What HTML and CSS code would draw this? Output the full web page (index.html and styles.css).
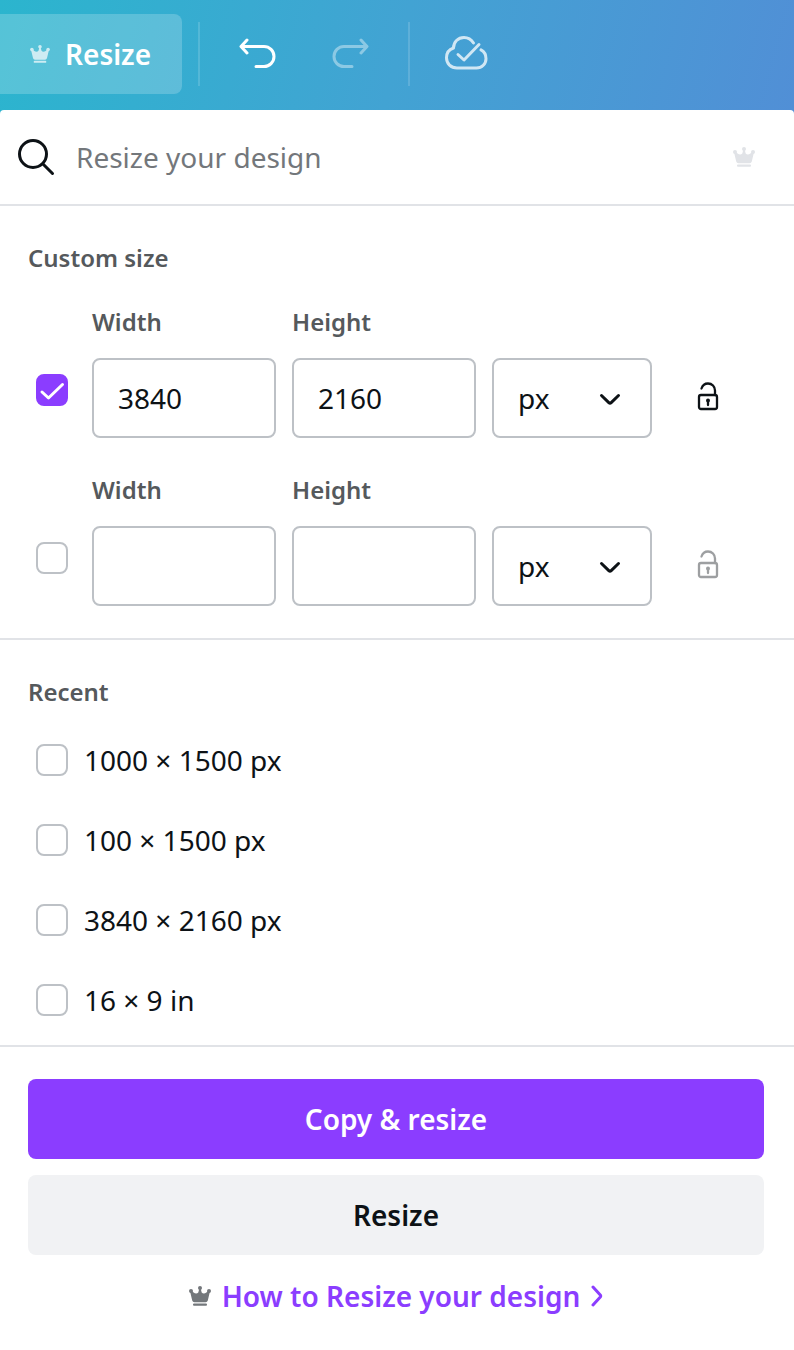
FILE: index.html
```html
<!DOCTYPE html>
<html lang="en">
<head>
    <meta charset="UTF-8">
    <meta name="viewport" content="width=device-width, initial-scale=1.0">
    <title>Resize</title>
    <link rel="stylesheet" href="styles.css">
</head>
<body>

<!-- Shared icons -->
<svg class="sprite" aria-hidden="true">
    <symbol id="crown" viewBox="0 0 22 20">
        <path d="M3.2 14.5 1.2 6 2.8 4.5C4 7 7.5 8.5 9.3 6.5L10.2 3h1.6l.9 3.5C14.5 8.5 18 7 19.2 4.5L20.8 6l-2 8.5q-.5 1.8-2.2 1.8H5.4q-1.7 0-2.2-1.8z"/>
        <circle cx="2" cy="5" r="2"/>
        <circle cx="11" cy="2" r="2"/>
        <circle cx="20" cy="5" r="2"/>
        <rect x="4" y="17.6" width="14" height="2.2" rx="1"/>
    </symbol>
    <symbol id="chevron" viewBox="0 0 24 16">
        <path d="M3.5 4.5 10.8 11.6q1.2 1.1 2.4 0L20.5 4.5" fill="none" stroke="currentColor" stroke-width="3" stroke-linecap="round" stroke-linejoin="round"/>
    </symbol>
    <symbol id="unlock" viewBox="0 0 24 32">
        <g fill="none" stroke="currentColor" stroke-width="2.3" stroke-linecap="round">
            <rect x="3" y="13" width="18" height="14" rx="2"/>
            <path d="M5.5 6.5C6.5 3.5 9 1.5 12 1.5c4 0 7 3 7 7V13"/>
            <path d="M12 19v4"/>
        </g>
        <circle cx="12" cy="18.6" r="2" fill="currentColor"/>
    </symbol>
</svg>

<header class="toolbar">
    <button type="button" class="tool-resize">
        <svg class="crown"><use href="#crown"/></svg>
        Resize
    </button>
    <span class="separator"></span>
    <button type="button" class="tool-btn" aria-label="Undo">
        <svg width="40" height="32" viewBox="0 0 40 32">
            <path d="M9 2 3 8.5l6 6.5M3.5 8.5H26a10 10 0 0 1 0 20H18"/>
        </svg>
    </button>
    <button type="button" class="tool-btn disabled" aria-label="Redo" disabled>
        <svg width="40" height="32" viewBox="0 0 40 32">
            <path d="M31 2l6 6.5-6 6.5M36.5 8.5H14a10 10 0 0 0 0 20H22"/>
        </svg>
    </button>
    <span class="separator"></span>
    <button type="button" class="tool-btn cloud" aria-label="All changes saved">
        <svg width="48" height="38" viewBox="0 0 48 38">
            <path d="M29.5 8C27.3 4.5 24 2.5 20 2.5c-6 0-10.5 4.5-10.5 10.5C5 14.5 2.5 18.5 2.5 22.8c0 6 4.5 10.2 10.5 10.2h19.500c5.5 0 9.500-4.300 9.500-9.300 0-4-2-7.200-5-8.800"/>
            <path d="M14 19.5l6 5.5L35 9.5"/>
        </svg>
    </button>
</header>

<main class="panel">
    <div class="search">
        <svg class="search-icon" width="40" height="40" viewBox="0 0 40 40">
            <circle cx="17" cy="17" r="13.5"/>
            <path d="M27 27l9.500 9.500"/>
        </svg>
        <input type="text" class="search-input" placeholder="Resize your design" aria-label="Resize your design">
        <svg class="crown"><use href="#crown"/></svg>
    </div>

    <section class="custom">
        <h2>Custom size</h2>

        <div class="size-rows">
            <div class="size-row">
                <span class="check">
                    <input type="checkbox" aria-label="Use first custom size" checked>
                    <svg viewBox="0 0 32 32"><path d="M6 18l6.5 6L26.5 10.5"/></svg>
                </span>
                <div class="field">
                    <label for="width-1">Width</label>
                    <input type="text" id="width-1" value="3840">
                </div>
                <div class="field">
                    <label for="height-1">Height</label>
                    <input type="text" id="height-1" value="2160">
                </div>
                <div class="unit">
                    <select aria-label="Unit">
                        <option>px</option>
                        <option>in</option>
                        <option>mm</option>
                        <option>cm</option>
                    </select>
                    <svg><use href="#chevron"/></svg>
                </div>
                <button type="button" class="lock" aria-label="Lock aspect ratio">
                    <svg><use href="#unlock"/></svg>
                </button>
            </div>

            <div class="size-row">
                <span class="check">
                    <input type="checkbox" aria-label="Use second custom size">
                    <svg viewBox="0 0 32 32"><path d="M6 18l6.5 6L26.5 10.5"/></svg>
                </span>
                <div class="field">
                    <label for="width-2">Width</label>
                    <input type="text" id="width-2">
                </div>
                <div class="field">
                    <label for="height-2">Height</label>
                    <input type="text" id="height-2">
                </div>
                <div class="unit">
                    <select aria-label="Unit">
                        <option>px</option>
                        <option>in</option>
                        <option>mm</option>
                        <option>cm</option>
                    </select>
                    <svg><use href="#chevron"/></svg>
                </div>
                <button type="button" class="lock" aria-label="Lock aspect ratio" disabled>
                    <svg><use href="#unlock"/></svg>
                </button>
            </div>
        </div>
    </section>

    <section class="recent">
        <h2>Recent</h2>
        <label class="recent-item">
            <span class="check"><input type="checkbox"><svg viewBox="0 0 32 32"><path d="M6 18l6.5 6L26.5 10.5"/></svg></span>
            1000 × 1500 px
        </label>
        <label class="recent-item">
            <span class="check"><input type="checkbox"><svg viewBox="0 0 32 32"><path d="M6 18l6.5 6L26.5 10.5"/></svg></span>
            100 × 1500 px
        </label>
        <label class="recent-item">
            <span class="check"><input type="checkbox"><svg viewBox="0 0 32 32"><path d="M6 18l6.5 6L26.5 10.5"/></svg></span>
            3840 × 2160 px
        </label>
        <label class="recent-item">
            <span class="check"><input type="checkbox"><svg viewBox="0 0 32 32"><path d="M6 18l6.5 6L26.5 10.5"/></svg></span>
            16 × 9 in
        </label>
    </section>

    <footer class="actions">
        <button type="button" class="btn btn-primary">Copy &amp; resize</button>
        <button type="button" class="btn btn-secondary">Resize</button>
        <div class="help">
            <svg class="crown"><use href="#crown"/></svg>
            <a href="#">How to Resize your design</a>
            <svg class="help-arrow" width="12" height="24" viewBox="0 0 12 24"><path d="M2 3l7.300 8q.8 1 0 2L2 21"/></svg>
        </div>
    </footer>
</main>

</body>
</html>
```
FILE: styles.css
```css
* {
    box-sizing: border-box;
}

body {
    margin: 0;
    font-family: 'Noto Sans', sans-serif;
    font-size: 28px;
    line-height: 40px;
    color: #0d1216;
    background: #fff;
}

button, input, select {
    font: inherit;
    color: inherit;
    margin: 0;
}

button {
    border: none;
    background: none;
    padding: 0;
    cursor: pointer;
}

.sprite {
    display: none;
}

.crown {
    width: 22px;
    height: 20px;
    flex: none;
    fill: currentColor;
}

/* Toolbar */
.toolbar {
    display: flex;
    align-items: center;
    height: 114px;
    padding: 14px 0 20px;
    background: linear-gradient(105deg, #2bb5ce, #42a3d3 50%, #518fd6);
    color: #fff;
}

.tool-resize {
    display: flex;
    align-items: center;
    gap: 15px;
    width: 182px;
    height: 80px;
    padding-left: 30px;
    border-radius: 0 8px 8px 0;
    background: rgba(255, 255, 255, 0.2);
    font-weight: 600;
}

.tool-resize .crown {
    width: 20px;
    height: 18px;
    opacity: 0.7;
}

.separator {
    width: 2px;
    height: 64px;
    margin: 0 16px;
    background: rgba(255, 255, 255, 0.15);
}

.tool-btn {
    display: flex;
    align-items: center;
    justify-content: center;
    width: 84px;
    height: 80px;
}

.tool-btn + .tool-btn {
    margin-left: 8px;
}

.tool-btn svg {
    fill: none;
    stroke: #fff;
    stroke-width: 3;
    stroke-linecap: round;
    stroke-linejoin: round;
}

.tool-btn.disabled {
    opacity: 0.4;
}

.tool-btn.cloud {
    opacity: 0.75;
}

/* Panel */
.panel {
    margin-top: -4px;
    border-radius: 4px 4px 0 0;
    background: #fff;
}

.search {
    display: flex;
    align-items: center;
    height: 96px;
    padding: 0 39px 0 16px;
    border-bottom: 2px solid #e1e3e7;
}

.search-icon {
    flex: none;
    fill: none;
    stroke: #0d1216;
    stroke-width: 3;
    stroke-linecap: round;
}

.search-input {
    flex: 1;
    min-width: 0;
    height: 80px;
    padding: 0 20px;
    border: none;
    outline: none;
    background: none;
}

.search-input::placeholder {
    color: #73777b;
    opacity: 1;
}

.search .crown {
    color: #e1e3e7;
}

h2 {
    margin: 0;
    font-size: 24px;
    line-height: 32px;
    font-weight: 600;
    color: #55595c;
}

.custom {
    padding: 36px 28px 32px;
    border-bottom: 2px solid #e1e3e7;
}

.size-rows {
    display: flex;
    flex-direction: column;
    gap: 36px;
    margin-top: 32px;
}

.size-row {
    display: flex;
    align-items: flex-end;
    gap: 16px;
}

.size-row .check {
    margin: 0 8px 32px;
}

.field {
    width: 184px;
}

.field label {
    display: block;
    margin-bottom: 20px;
    font-size: 24px;
    line-height: 32px;
    font-weight: 600;
    color: #55595c;
}

.field input, .unit select {
    display: block;
    width: 100%;
    height: 80px;
    padding: 0 24px;
    border: 2px solid #bdc1c6;
    border-radius: 8px;
    background: #fff;
}

.unit {
    position: relative;
    width: 160px;
}

.unit select {
    appearance: none;
}

.unit svg {
    position: absolute;
    top: 33px;
    right: 30px;
    width: 24px;
    height: 16px;
    pointer-events: none;
}

.lock {
    width: 80px;
    height: 80px;
    display: flex;
    align-items: center;
    justify-content: center;
}

.lock svg {
    width: 24px;
    height: 32px;
}

.lock:disabled {
    opacity: 0.4;
}

/* Checkbox */
.check {
    position: relative;
    flex: none;
    width: 32px;
    height: 32px;
}

.check input {
    appearance: none;
    display: block;
    width: 32px;
    height: 32px;
    border: 2px solid #bdc1c6;
    border-radius: 8px;
    background: #fff;
}

.check input:checked {
    border-color: #8b3dff;
    background: #8b3dff;
}

.check svg {
    position: absolute;
    inset: 0;
    display: none;
    fill: none;
    stroke: #fff;
    stroke-width: 3;
    stroke-linecap: round;
    stroke-linejoin: round;
    pointer-events: none;
}

.check input:checked + svg {
    display: block;
}

/* Recent sizes */
.recent {
    padding: 36px 28px 5px;
    border-bottom: 2px solid #e1e3e7;
}

.recent h2 {
    margin-bottom: 12px;
}

.recent-item {
    display: flex;
    align-items: center;
    gap: 16px;
    height: 80px;
    padding-left: 8px;
}

/* Actions */
.actions {
    display: flex;
    flex-direction: column;
    gap: 16px;
    padding: 32px 30px 28px 28px;
}

.btn {
    height: 80px;
    border-radius: 8px;
    font-weight: 600;
}

.btn-primary {
    background: #8b3dff;
    color: #fff;
}

.btn-secondary {
    background: #f1f2f4;
}

.help {
    display: flex;
    align-items: center;
    justify-content: center;
    gap: 11px;
    height: 50px;
    color: #73777b;
}

.help a {
    font-weight: 600;
    color: #8b3dff;
    text-decoration: none;
}

.help-arrow {
    fill: none;
    stroke: #8b3dff;
    stroke-width: 3;
    stroke-linecap: round;
    stroke-linejoin: round;
}
```
